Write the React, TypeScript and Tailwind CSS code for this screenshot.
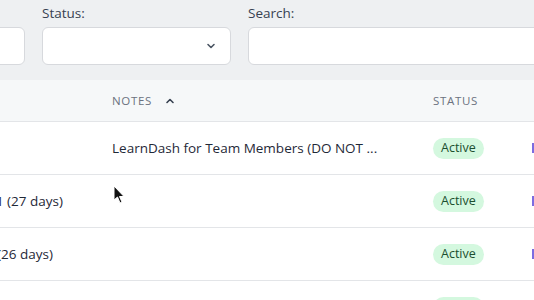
import React from "react";

const rows = [
  { left: "", lpad: 0, notes: "LearnDash for Team Members (DO NOT ...", status: "Active" },
  { left: "Jul 31 (27 days)", lpad: 49, notes: "", status: "Active" },
  { left: "Aug 1 (26 days)", lpad: 59, notes: "", status: "Active" },
  { left: "", lpad: 0, notes: "", status: "Active" },
];

const Chevron = ({ up }: { up?: boolean }) => (
  <svg width="10" height="10" viewBox="0 0 10 10" className={up ? "rotate-180" : ""}>
    <path d="M2 3.5 L5 6.5 L8 3.5" fill="none" stroke="currentColor" strokeWidth="1.6" strokeLinecap="round" strokeLinejoin="round" />
  </svg>
);

const App = () => {
  return (
    <div className="w-[534px] h-[300px] overflow-hidden bg-white text-[#1f2937]" style={{ fontFamily: "'Open Sans', 'Noto Sans', sans-serif" }}>
      <div className="h-[80px] bg-[#eef0f2] flex gap-[17px] pt-[4px]">
        <div className="-ml-[200px] w-[225px] shrink-0 flex flex-col">
          <div className="h-[23px] text-[13.5px] text-[#374151]">&nbsp;</div>
          <div className="h-[38px] rounded-md border border-[#d7d9dd] bg-white" />
        </div>
        <div className="w-[189px] shrink-0 flex flex-col">
          <div className="h-[23px] text-[13.5px] text-[#374151] leading-[18px]">Status:</div>
          <div className="h-[38px] rounded-md border border-[#d7d9dd] bg-white flex items-center justify-end pr-[14px] text-[#4b5563]">
            <Chevron />
          </div>
        </div>
        <div className="w-[300px] shrink-0 flex flex-col">
          <div className="h-[23px] text-[13.5px] text-[#374151] leading-[18px]">Search:</div>
          <div className="h-[38px] rounded-md border border-[#d7d9dd] bg-white" />
        </div>
      </div>

      <div className="h-[42px] bg-[#f6f8f9] border-b border-[#e3e5e8] flex items-center text-[11.5px] tracking-[0.06em] text-[#6b7280]">
        <div className="w-[112px] shrink-0" />
        <div className="w-[321px] shrink-0 flex items-center gap-[13px]">
          NOTES
          <span className="text-[#374151]"><Chevron up /></span>
        </div>
        <div className="w-[99px] shrink-0">STATUS</div>
      </div>

      {rows.map((r, i) => (
        <div key={i} className="relative h-[53px] border-b border-[#e3e5e8] flex items-center text-[13.5px]">
          <div className="w-[112px] shrink-0 overflow-hidden flex justify-end whitespace-nowrap" style={{ paddingRight: r.lpad }}>
            {r.left}
          </div>
          <div className="w-[321px] shrink-0 whitespace-nowrap">{r.notes}</div>
          <div className="w-[99px] shrink-0">
            <span className="inline-block rounded-full bg-[#d4f8df] text-[#1b4f30] px-[8px] py-[1px] text-[12.5px]">{r.status}</span>
          </div>
          <div className="w-[4px] h-[10px] shrink-0 bg-[#7c6ce0]" />
          {i === 1 && (
            <svg className="absolute left-[113px] top-[10px]" width="14" height="20" viewBox="0 0 14 20">
              <path d="M1 1 L1 15 L4.5 12 L7 18 L9 17 L6.5 11.5 L11 11.5 Z" fill="#111" stroke="#fff" strokeWidth="1" />
            </svg>
          )}
        </div>
      ))}
    </div>
  );
};

export default App;
